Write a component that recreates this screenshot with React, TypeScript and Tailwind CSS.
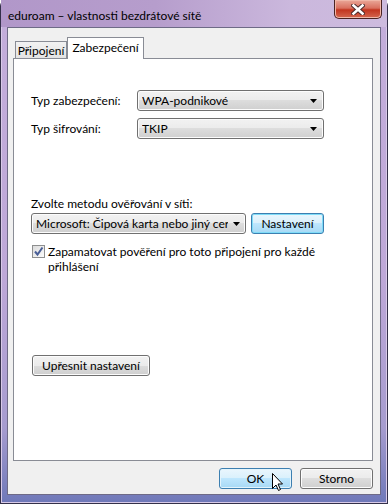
import React from 'react';

const btn =
  'flex h-[21px] items-center rounded-[3px] border border-[#707070] bg-[linear-gradient(to_bottom,#f2f2f2_0%,#ebebeb_50%,#dddddd_50%,#cfcfcf_100%)] shadow-[inset_0_0_0_1px_#fcfcfc] text-black';

const blueBtn =
  'flex h-[21px] items-center justify-center rounded-[3px] border border-[#3c7fb1] bg-[linear-gradient(to_bottom,#eaf6fd_0%,#d9f0fc_50%,#bee6fd_50%,#a7d9f5_100%)] text-black';

function Arrow() {
  return (
    <svg width="7" height="4" viewBox="0 0 7 4" className="shrink-0">
      <polygon points="0,0 7,0 3.5,4" fill="#000" />
    </svg>
  );
}

function Combo({ value }: { value: string }) {
  return (
    <div className={`${btn} w-[187px] justify-between pl-[4px] pr-[6px]`}>
      <span className="overflow-hidden whitespace-nowrap">{value}</span>
      <Arrow />
    </div>
  );
}

function CloseButton() {
  return (
    <div className="flex h-[19px] w-[48px] items-center justify-center rounded-b-[5px] border border-t-0 border-[#4a2322] bg-[linear-gradient(to_bottom,#eaa899_0%,#d9705f_45%,#c2351f_55%,#d4674f_100%)] shadow-[inset_0_0_0_1px_#f0b7a8]">
      <svg width="14" height="11" viewBox="0 0 14 11">
        <path d="M2.5 1.5 L11.5 9.5 M11.5 1.5 L2.5 9.5" stroke="#4a2a2a" strokeWidth="4.5" strokeLinecap="square" />
        <path d="M2.5 1.5 L11.5 9.5 M11.5 1.5 L2.5 9.5" stroke="#ffffff" strokeWidth="2.6" strokeLinecap="square" />
      </svg>
    </div>
  );
}

function Checkbox() {
  return (
    <div className="mt-[1px] flex h-[13px] w-[13px] shrink-0 items-center justify-center border border-[#8e8f8f] bg-[linear-gradient(135deg,#dcdcdc,#fbfbfb)]">
      <svg width="11" height="11" viewBox="0 0 11 11">
        <path d="M2 5.5 L4.5 8.5 L9.5 1.5" stroke="#4a5f97" strokeWidth="2" fill="none" />
      </svg>
    </div>
  );
}

function Cursor() {
  return (
    <svg width="12" height="19" viewBox="0 0 12 19" className="absolute left-[272px] top-[473px]">
      <path d="M0.5 0.5 L0.5 15.5 L4 12 L6.5 17.5 L8.5 16.5 L6 11 L10.5 11 Z" fill="#fff" stroke="#000" strokeWidth="1" />
    </svg>
  );
}

export default function App() {
  return (
    <div className="relative h-[504px] w-[388px] overflow-hidden bg-white font-['Lato',sans-serif] text-[12px] leading-[15px] text-black">
      <div className="flex h-[504px] w-[388px] flex-col rounded-t-[6px] border-x border-b border-[#34304a] bg-[linear-gradient(to_bottom,#c4aedb_0%,#bea8d8_55%,#a69ccf_85%,#6f78b9_100%)] shadow-[inset_0_0_0_1px_#d8cae8]">
        <div className="flex h-[27px] items-start justify-between bg-[linear-gradient(to_right,#b197c9_0%,#b69dcc_40%,#cbb8dd_75%,#cdbbde_100%)] pl-[7px] pr-[5px]">
          <span className="mt-[8px] text-[12px] leading-[15px] text-black">eduroam – vlastnosti bezdrátové sítě</span>
          <CloseButton />
        </div>

        <div className="mx-[6px] flex h-[468px] flex-col border border-[#6e6a86] bg-[#f0f0f0]">
          <div className="ml-[5px] mt-[8px] flex h-[22px] items-end">
            <div className="ml-[2px] flex h-[17px] w-[52px] items-center justify-center border border-b-0 border-[#898c95] bg-[linear-gradient(to_bottom,#f2f2f2,#e3e3e3)] pt-[1px]">
              Připojení
            </div>
            <div className="relative z-10 -mb-[1px] flex h-[22px] w-[77px] items-start justify-center border border-b-0 border-[#898c95] bg-white pt-[2px]">
              Zabezpečení
            </div>
          </div>

          <div className="ml-[5px] flex h-[403px] w-[360px] flex-col border border-[#898c95] bg-white pl-[17px]">
            <div className="mt-[31px] grid grid-cols-[106px_187px] items-center gap-y-[7px]">
              <span>Typ zabezpečení:</span>
              <Combo value="WPA-podnikové" />
              <span>Typ šifrování:</span>
              <Combo value="TKIP" />
            </div>

            <div className="mt-[57px]">Zvolte metodu ověřování v síti:</div>
            <div className="mt-[2px] flex gap-[5px]">
              <div className={`${btn} w-[215px] justify-between pl-[4px] pr-[5px]`}>
                <span className="w-[192px] overflow-hidden whitespace-nowrap">Microsoft: Čipová karta nebo jiný certifikát</span>
                <Arrow />
              </div>
              <div className={`${blueBtn} w-[73px] shadow-[inset_0_0_0_1px_#7fdcf8]`}>Nastavení</div>
            </div>

            <div className="ml-[1px] mt-[10px] flex items-start gap-[3px]">
              <Checkbox />
              <span className="w-[270px]">Zapamatovat pověření pro toto připojení pro každé přihlášení</span>
            </div>

            <div className={`${btn} ml-[1px] mt-[81px] w-[118px] justify-center`}>Upřesnit nastavení</div>
          </div>

          <div className="ml-[5px] mt-[7px] flex w-[360px] justify-end gap-[8px]">
            <div className={`${blueBtn} w-[73px] shadow-[inset_0_0_0_1px_#e3f4fc]`}>OK</div>
            <div className={`${btn} w-[73px] justify-center`}>Storno</div>
          </div>
        </div>
      </div>
      <Cursor />
    </div>
  );
}
